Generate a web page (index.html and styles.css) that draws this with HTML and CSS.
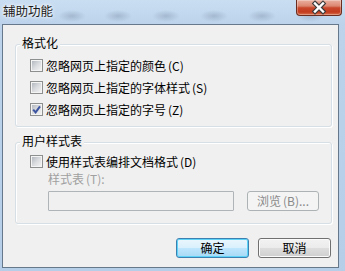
FILE: index.html
```html
<!DOCTYPE html>
<html lang="zh-CN">
<head>
<meta charset="utf-8">
<title>辅助功能</title>
<link rel="stylesheet" href="styles.css">
</head>
<body>
<div class="window">
  <div class="titlebar">
    <span class="title">辅助功能</span>
    <div class="close">
      <svg width="44" height="15" viewBox="0 0 44 15">
        <path d="M18 3.5 L26 11.5 M26 3.5 L18 11.5" stroke="#3b3b3b" stroke-width="4.6" stroke-linecap="square" fill="none"/>
        <path d="M18 3.5 L26 11.5 M26 3.5 L18 11.5" stroke="#ffffff" stroke-width="2.4" stroke-linecap="square" fill="none"/>
      </svg>
    </div>
  </div>
  <div class="client">
    <div class="group g1">
      <div class="legend">格式化</div>
      <div class="rows">
        <div class="row"><span class="cb"></span><span class="lbl">忽略网页上指定的颜色<span class="key">(C)</span></span></div>
        <div class="row"><span class="cb"></span><span class="lbl">忽略网页上指定的字体样式<span class="key">(S)</span></span></div>
        <div class="row"><span class="cb checked"><svg width="9" height="9" viewBox="0 0 9 9"><path d="M1.2 4.6 L3.6 7.4 L8 1.3" stroke="#3d55a0" stroke-width="2" fill="none"/></svg></span><span class="lbl">忽略网页上指定的字号<span class="key">(Z)</span></span></div>
      </div>
    </div>
    <div class="group g2">
      <div class="legend">用户样式表</div>
      <div class="row first"><span class="cb"></span><span class="lbl">使用样式表编排文档格式<span class="key">(D)</span></span></div>
      <div class="sub">
        <div class="dim">样式表<span class="key">(T)</span>:</div>
        <div class="pick">
          <div class="input"></div>
          <div class="btn disabled">浏览<span class="key">(B)</span>...</div>
        </div>
      </div>
    </div>
    <div class="actions">
      <div class="btn default">确定</div>
      <div class="btn">取消</div>
    </div>
  </div>
</div>
</body>
</html>
```

FILE: styles.css
```css
* { box-sizing: border-box; }
html, body { margin: 0; padding: 0; }
body {
  width: 345px;
  height: 271px;
  overflow: hidden;
  font-family: "Noto Sans CJK SC", "Noto Sans", sans-serif;
  font-size: 12px;
  color: #000;
}
.window {
  width: 345px;
  height: 271px;
  display: flex;
  flex-direction: column;
  background:
    radial-gradient(ellipse 14px 6px at 72px 16px, rgba(110,130,150,0.35), transparent),
    radial-gradient(ellipse 14px 6px at 118px 16px, rgba(110,130,150,0.35), transparent),
    radial-gradient(ellipse 14px 6px at 166px 16px, rgba(110,130,150,0.35), transparent),
    radial-gradient(ellipse 14px 6px at 214px 16px, rgba(110,130,150,0.35), transparent),
    radial-gradient(ellipse 14px 6px at 262px 16px, rgba(110,130,150,0.35), transparent),
    radial-gradient(ellipse 14px 6px at 310px 16px, rgba(110,130,150,0.3), transparent),
    linear-gradient(#cadef2 0px, #bcd3eb 24px, #b6cee8 100%);
}
.titlebar {
  height: 24px;
  display: flex;
  justify-content: space-between;
  align-items: flex-start;
  padding-left: 3px;
  padding-right: 3px;
}
.title {
  margin-top: 4px;
  font-size: 12.5px;
  line-height: 14px;
  color: #1b1b1b;
  text-shadow: 0 0 5px #fff, 0 0 3px #fff;
}
.close {
  width: 46px;
  height: 16px;
  border: 1px solid #6b2d1f;
  border-top: none;
  border-radius: 0 0 4px 4px;
  background: linear-gradient(#eab0a0 0%, #dc8771 40%, #c9472c 52%, #c33c1f 80%, #d8724f 100%);
  box-shadow: inset 0 0 0 1px rgba(255,255,255,0.3);
  display: flex;
  align-items: center;
  justify-content: center;
}
.close svg { display: block; }
.client {
  height: 244px;
  margin: 0 6px 0 2px;
  border: 1px solid #66788c;
  background: #f0f0f0;
  padding: 0 6px 0 12px;
}
.group {
  border: 1px solid #d5dfe5;
  border-radius: 3px;
  box-shadow: inset 1px 1px 0 #fff, 1px 1px 0 #fff;
  padding: 0 0 0 14px;
}
.g1 { margin-top: 19px; height: 83px; }
.g2 { margin-top: 15px; height: 82px; }
.legend {
  width: fit-content;
  margin: -9px 0 0 -10px;
  padding: 0 2px;
  background: #f0f0f0;
  line-height: 14px;
  height: 14px;
}
.rows {
  margin-top: 9px;
  display: flex;
  flex-direction: column;
  gap: 9px;
}
.row {
  height: 13px;
  display: flex;
  align-items: center;
  gap: 2px;
  line-height: 13px;
  white-space: nowrap;
}
.row.first { margin-top: 7px; }
.lbl { margin-left: 1px; }
.key { margin-left: 2px; }
.cb {
  flex: none;
  width: 13px;
  height: 13px;
  padding: 1px;
  border: 1px solid #8e8f8f;
  background: linear-gradient(135deg, #b4b9c0 0%, #d9dbde 50%, #f2f2f2 100%) content-box, #f4f4f4;
  display: flex;
}
.cb svg { display: block; }
.sub { margin-left: 18px; }
.dim {
  margin-top: 4px;
  line-height: 14px;
  height: 14px;
  color: #a0a0a0;
}
.pick {
  margin-top: 5px;
  display: flex;
  gap: 13px;
}
.input {
  width: 186px;
  height: 20px;
  border: 1px solid #afb4b8;
  border-radius: 1px;
  background: #f0f0f0;
}
.btn {
  width: 73px;
  height: 20px;
  border: 1px solid #707070;
  border-radius: 3px;
  background: linear-gradient(#f2f2f2 0%, #ebebeb 50%, #dddddd 51%, #cfcfcf 100%);
  box-shadow: inset 0 0 0 1px #fbfbfb;
  display: flex;
  align-items: center;
  justify-content: center;
  line-height: 14px;
  white-space: nowrap;
}
.btn.disabled {
  width: 72px;
  border-color: #adb2b5;
  background: #f4f4f4;
  box-shadow: none;
  color: #8a8a8a;
}
.btn.default {
  border-color: #3c7fb1;
  background: linear-gradient(#eaf6fd 0%, #d9f0fc 50%, #bee6fd 51%, #a7d9f5 100%);
  box-shadow: inset 0 0 0 1px #5ed3f8;
}
.actions {
  margin-top: 14px;
  margin-right: 1px;
  display: flex;
  justify-content: flex-end;
  gap: 9px;
}
```
